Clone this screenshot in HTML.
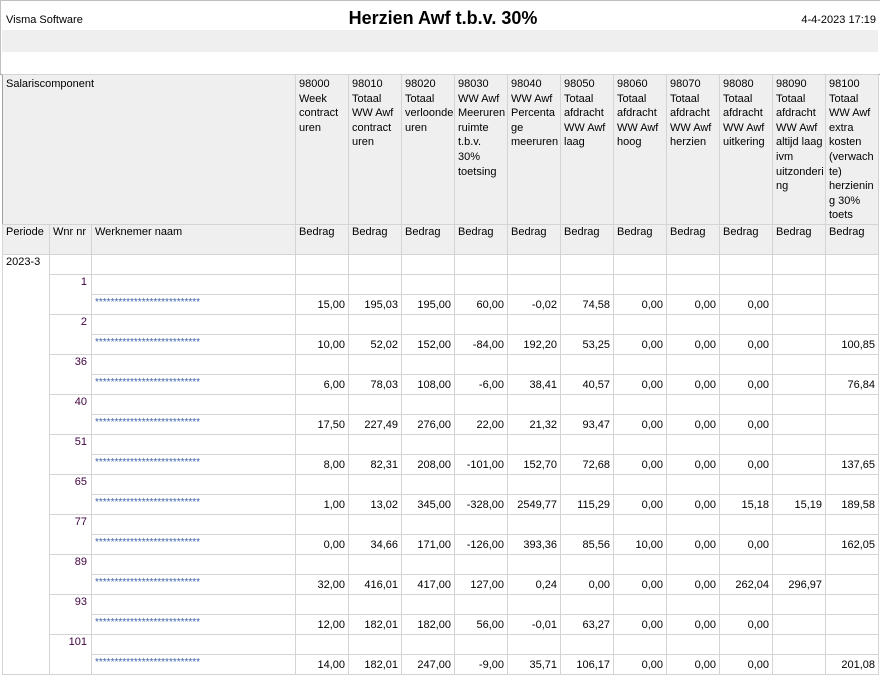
<!DOCTYPE html>
<html><head><meta charset="utf-8"><style>
body{margin:0;width:880px;height:678px;background:#fff;position:relative;overflow:hidden;font-family:"Liberation Sans",Arial,sans-serif;font-size:11px;color:#000}
.abs{position:absolute}
table{position:absolute;left:2px;top:74px;border-collapse:collapse;table-layout:fixed;width:877px}
td{border:1px solid #d4d4d4;padding:0;vertical-align:top;overflow:hidden;white-space:nowrap}
tr.h{height:150px}
tr.h td{background:#efefef;padding:2px 0 0 3px;line-height:14.6px}
tr.b{height:30px}
tr.b td{background:#efefef;padding:0 0 0 3px;line-height:15px}
tr.r{height:20px}
tr.r td{line-height:12px;vertical-align:middle}
td.n{text-align:right;padding-right:3px}
td.w{color:#400040;text-align:right;padding-right:4px;vertical-align:top!important;line-height:15px!important}
td.s{color:#3a5fa8;font-size:10px;line-height:10px!important;padding:0 0 4px 3px}
td.p{padding:0 0 0 3px;vertical-align:top!important;line-height:15px!important}
tr.h td:first-child{border-left:1px solid #a0a0a0}
</style></head><body>
<div class="abs" style="left:0;top:0;width:880px;height:1px;background:#c0c0c0"></div>
<div class="abs" style="left:0;top:0;width:1px;height:74px;background:#c0c0c0"></div>
<div class="abs" style="left:6px;top:14px">Visma Software</div>
<div class="abs" style="left:300px;top:8px;width:286px;text-align:center;font-weight:bold;font-size:18px">Herzien Awf t.b.v. 30%</div>
<div class="abs" style="right:4px;top:14px">4-4-2023 17:19</div>
<div class="abs" style="left:2px;top:30px;width:876px;height:22px;background:#efefef"></div>
<div class="abs" style="left:0;top:74px;width:880px;height:1px;background:#a0a0a0"></div>
<table>
<colgroup><col style="width:47px"><col style="width:42px"><col style="width:204px"><col style="width:53px"><col style="width:53px"><col style="width:53px"><col style="width:53px"><col style="width:53px"><col style="width:53px"><col style="width:53px"><col style="width:53px"><col style="width:53px"><col style="width:53px"><col style="width:53px"></colgroup>
<tr class="h"><td colspan="3">Salariscomponent</td><td>98000<br>Week<br>contract<br>uren</td><td>98010<br>Totaal<br>WW Awf<br>contract<br>uren</td><td>98020<br>Totaal<br>verloonde<br>uren</td><td>98030<br>WW Awf<br>Meeruren<br>ruimte<br>t.b.v.<br>30%<br>toetsing</td><td>98040<br>WW Awf<br>Percenta<br>ge<br>meeruren</td><td>98050<br>Totaal<br>afdracht<br>WW Awf<br>laag</td><td>98060<br>Totaal<br>afdracht<br>WW Awf<br>hoog</td><td>98070<br>Totaal<br>afdracht<br>WW Awf<br>herzien</td><td>98080<br>Totaal<br>afdracht<br>WW Awf<br>uitkering</td><td>98090<br>Totaal<br>afdracht<br>WW Awf<br>altijd laag<br>ivm<br>uitzonderi<br>ng</td><td>98100<br>Totaal<br>WW Awf<br>extra<br>kosten<br>(verwach<br>te)<br>herzienin<br>g 30%<br>toets</td></tr>
<tr class="b"><td>Periode</td><td>Wnr nr</td><td>Werknemer naam</td><td>Bedrag</td><td>Bedrag</td><td>Bedrag</td><td>Bedrag</td><td>Bedrag</td><td>Bedrag</td><td>Bedrag</td><td>Bedrag</td><td>Bedrag</td><td>Bedrag</td><td>Bedrag</td></tr>
<tr class="r"><td class="p" rowspan="21">2023-3</td><td></td><td></td><td></td><td></td><td></td><td></td><td></td><td></td><td></td><td></td><td></td><td></td><td></td></tr>
<tr class="r"><td class="w" rowspan="2">1</td><td></td><td></td><td></td><td></td><td></td><td></td><td></td><td></td><td></td><td></td><td></td><td></td></tr>
<tr class="r"><td class="s">***************************</td><td class="n">15,00</td><td class="n">195,03</td><td class="n">195,00</td><td class="n">60,00</td><td class="n">-0,02</td><td class="n">74,58</td><td class="n">0,00</td><td class="n">0,00</td><td class="n">0,00</td><td class="n"></td><td class="n"></td></tr>
<tr class="r"><td class="w" rowspan="2">2</td><td></td><td></td><td></td><td></td><td></td><td></td><td></td><td></td><td></td><td></td><td></td><td></td></tr>
<tr class="r"><td class="s">***************************</td><td class="n">10,00</td><td class="n">52,02</td><td class="n">152,00</td><td class="n">-84,00</td><td class="n">192,20</td><td class="n">53,25</td><td class="n">0,00</td><td class="n">0,00</td><td class="n">0,00</td><td class="n"></td><td class="n">100,85</td></tr>
<tr class="r"><td class="w" rowspan="2">36</td><td></td><td></td><td></td><td></td><td></td><td></td><td></td><td></td><td></td><td></td><td></td><td></td></tr>
<tr class="r"><td class="s">***************************</td><td class="n">6,00</td><td class="n">78,03</td><td class="n">108,00</td><td class="n">-6,00</td><td class="n">38,41</td><td class="n">40,57</td><td class="n">0,00</td><td class="n">0,00</td><td class="n">0,00</td><td class="n"></td><td class="n">76,84</td></tr>
<tr class="r"><td class="w" rowspan="2">40</td><td></td><td></td><td></td><td></td><td></td><td></td><td></td><td></td><td></td><td></td><td></td><td></td></tr>
<tr class="r"><td class="s">***************************</td><td class="n">17,50</td><td class="n">227,49</td><td class="n">276,00</td><td class="n">22,00</td><td class="n">21,32</td><td class="n">93,47</td><td class="n">0,00</td><td class="n">0,00</td><td class="n">0,00</td><td class="n"></td><td class="n"></td></tr>
<tr class="r"><td class="w" rowspan="2">51</td><td></td><td></td><td></td><td></td><td></td><td></td><td></td><td></td><td></td><td></td><td></td><td></td></tr>
<tr class="r"><td class="s">***************************</td><td class="n">8,00</td><td class="n">82,31</td><td class="n">208,00</td><td class="n">-101,00</td><td class="n">152,70</td><td class="n">72,68</td><td class="n">0,00</td><td class="n">0,00</td><td class="n">0,00</td><td class="n"></td><td class="n">137,65</td></tr>
<tr class="r"><td class="w" rowspan="2">65</td><td></td><td></td><td></td><td></td><td></td><td></td><td></td><td></td><td></td><td></td><td></td><td></td></tr>
<tr class="r"><td class="s">***************************</td><td class="n">1,00</td><td class="n">13,02</td><td class="n">345,00</td><td class="n">-328,00</td><td class="n">2549,77</td><td class="n">115,29</td><td class="n">0,00</td><td class="n">0,00</td><td class="n">15,18</td><td class="n">15,19</td><td class="n">189,58</td></tr>
<tr class="r"><td class="w" rowspan="2">77</td><td></td><td></td><td></td><td></td><td></td><td></td><td></td><td></td><td></td><td></td><td></td><td></td></tr>
<tr class="r"><td class="s">***************************</td><td class="n">0,00</td><td class="n">34,66</td><td class="n">171,00</td><td class="n">-126,00</td><td class="n">393,36</td><td class="n">85,56</td><td class="n">10,00</td><td class="n">0,00</td><td class="n">0,00</td><td class="n"></td><td class="n">162,05</td></tr>
<tr class="r"><td class="w" rowspan="2">89</td><td></td><td></td><td></td><td></td><td></td><td></td><td></td><td></td><td></td><td></td><td></td><td></td></tr>
<tr class="r"><td class="s">***************************</td><td class="n">32,00</td><td class="n">416,01</td><td class="n">417,00</td><td class="n">127,00</td><td class="n">0,24</td><td class="n">0,00</td><td class="n">0,00</td><td class="n">0,00</td><td class="n">262,04</td><td class="n">296,97</td><td class="n"></td></tr>
<tr class="r"><td class="w" rowspan="2">93</td><td></td><td></td><td></td><td></td><td></td><td></td><td></td><td></td><td></td><td></td><td></td><td></td></tr>
<tr class="r"><td class="s">***************************</td><td class="n">12,00</td><td class="n">182,01</td><td class="n">182,00</td><td class="n">56,00</td><td class="n">-0,01</td><td class="n">63,27</td><td class="n">0,00</td><td class="n">0,00</td><td class="n">0,00</td><td class="n"></td><td class="n"></td></tr>
<tr class="r"><td class="w" rowspan="2">101</td><td></td><td></td><td></td><td></td><td></td><td></td><td></td><td></td><td></td><td></td><td></td><td></td></tr>
<tr class="r"><td class="s">***************************</td><td class="n">14,00</td><td class="n">182,01</td><td class="n">247,00</td><td class="n">-9,00</td><td class="n">35,71</td><td class="n">106,17</td><td class="n">0,00</td><td class="n">0,00</td><td class="n">0,00</td><td class="n"></td><td class="n">201,08</td></tr>
</table>
</body></html>
